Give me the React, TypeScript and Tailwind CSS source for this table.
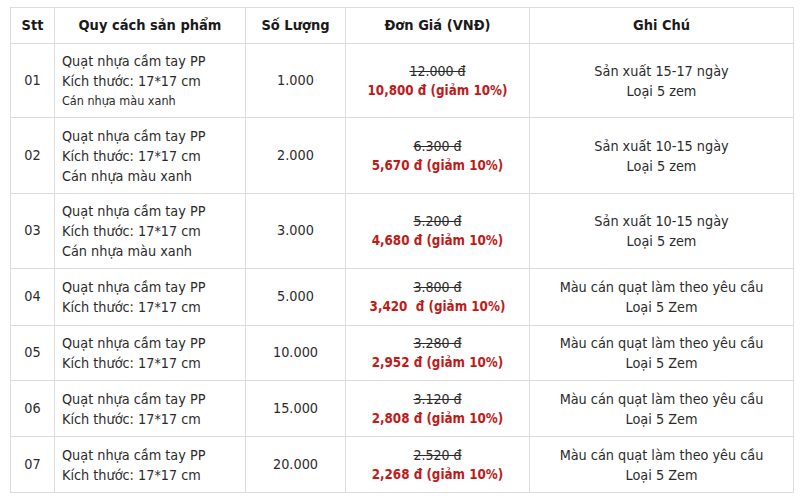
import React from "react";

interface Row {
  stt: string;
  spec: string[];
  smallLast?: boolean;
  qty: string;
  oldPrice: string;
  newPrice: string;
  notes: string[];
}

const rows: Row[] = [
  {
    stt: "01",
    spec: ["Quạt nhựa cầm tay PP", "Kích thước: 17*17 cm", "Cán nhựa màu xanh"],
    smallLast: true,
    qty: "1.000",
    oldPrice: "12.000 đ",
    newPrice: "10,800 đ (giảm 10%)",
    notes: ["Sản xuất 15-17 ngày", "Loại 5 zem"],
  },
  {
    stt: "02",
    spec: ["Quạt nhựa cầm tay PP", "Kích thước: 17*17 cm", "Cán nhựa màu xanh"],
    qty: "2.000",
    oldPrice: "6.300 đ",
    newPrice: "5,670 đ (giảm 10%)",
    notes: ["Sản xuất 10-15 ngày", "Loại 5 zem"],
  },
  {
    stt: "03",
    spec: ["Quạt nhựa cầm tay PP", "Kích thước: 17*17 cm", "Cán nhựa màu xanh"],
    qty: "3.000",
    oldPrice: "5.200 đ",
    newPrice: "4,680 đ (giảm 10%)",
    notes: ["Sản xuất 10-15 ngày", "Loại 5 zem"],
  },
  {
    stt: "04",
    spec: ["Quạt nhựa cầm tay PP", "Kích thước: 17*17 cm"],
    qty: "5.000",
    oldPrice: "3.800 đ",
    newPrice: "3,420\u00a0 đ (giảm 10%)",
    notes: ["Màu cán quạt làm theo yêu cầu", "Loại 5 Zem"],
  },
  {
    stt: "05",
    spec: ["Quạt nhựa cầm tay PP", "Kích thước: 17*17 cm"],
    qty: "10.000",
    oldPrice: "3.280 đ",
    newPrice: "2,952 đ (giảm 10%)",
    notes: ["Màu cán quạt làm theo yêu cầu", "Loại 5 Zem"],
  },
  {
    stt: "06",
    spec: ["Quạt nhựa cầm tay PP", "Kích thước: 17*17 cm"],
    qty: "15.000",
    oldPrice: "3.120 đ",
    newPrice: "2,808 đ (giảm 10%)",
    notes: ["Màu cán quạt làm theo yêu cầu", "Loại 5 Zem"],
  },
  {
    stt: "07",
    spec: ["Quạt nhựa cầm tay PP", "Kích thước: 17*17 cm"],
    qty: "20.000",
    oldPrice: "2.520 đ",
    newPrice: "2,268 đ (giảm 10%)",
    notes: ["Màu cán quạt làm theo yêu cầu", "Loại 5 Zem"],
  },
];

const heights = ["h-[74px]", "h-[76px]", "h-[75px]", "h-[57px]", "h-[55px]", "h-[56px]", "h-[56px]"];

const cell = "border border-[#dcdcdc] align-middle";

const App: React.FC = () => {
  return (
    <div className="w-[800px] h-[500px] bg-white pt-[7px] pl-[10px] text-[#2b2b2b] font-['DejaVu_Sans_Condensed','DejaVu_Sans',sans-serif] text-[14.3px]">
      <table className="table-fixed border-collapse w-[783px]">
        <colgroup>
          <col className="w-[44px]" />
          <col className="w-[191px]" />
          <col className="w-[100px]" />
          <col className="w-[184px]" />
          <col className="w-[264px]" />
        </colgroup>
        <thead>
          <tr className="h-[36px] text-[#1a1a1a] font-bold text-[14.5px]">
            <th className={cell}>Stt</th>
            <th className={cell}>Quy cách sản phẩm</th>
            <th className={cell}>Số Lượng</th>
            <th className={cell}>Đơn Giá (VNĐ)</th>
            <th className={cell}>Ghi Chú</th>
          </tr>
        </thead>
        <tbody>
          {rows.map((r, i) => (
            <tr key={r.stt} className={heights[i]}>
              <td className={`${cell} text-center`}>{r.stt}</td>
              <td className={`${cell} pl-[7px] leading-[20px]`}>
                {r.spec.map((s, j) => (
                  <div
                    key={j}
                    className={r.smallLast && j === r.spec.length - 1 ? "text-[12.5px]" : ""}
                  >
                    {s}
                  </div>
                ))}
              </td>
              <td className={`${cell} text-center`}>{r.qty}</td>
              <td className={`${cell} text-center leading-[19px]`}>
                <div className="line-through text-[14px]">{r.oldPrice}</div>
                <div className="font-bold text-[13.3px] text-[#bf1a1a]">{r.newPrice}</div>
              </td>
              <td className={`${cell} text-center leading-[20px]`}>
                {r.notes.map((n, j) => (
                  <div key={j}>{n}</div>
                ))}
              </td>
            </tr>
          ))}
        </tbody>
      </table>
    </div>
  );
};

export default App;
